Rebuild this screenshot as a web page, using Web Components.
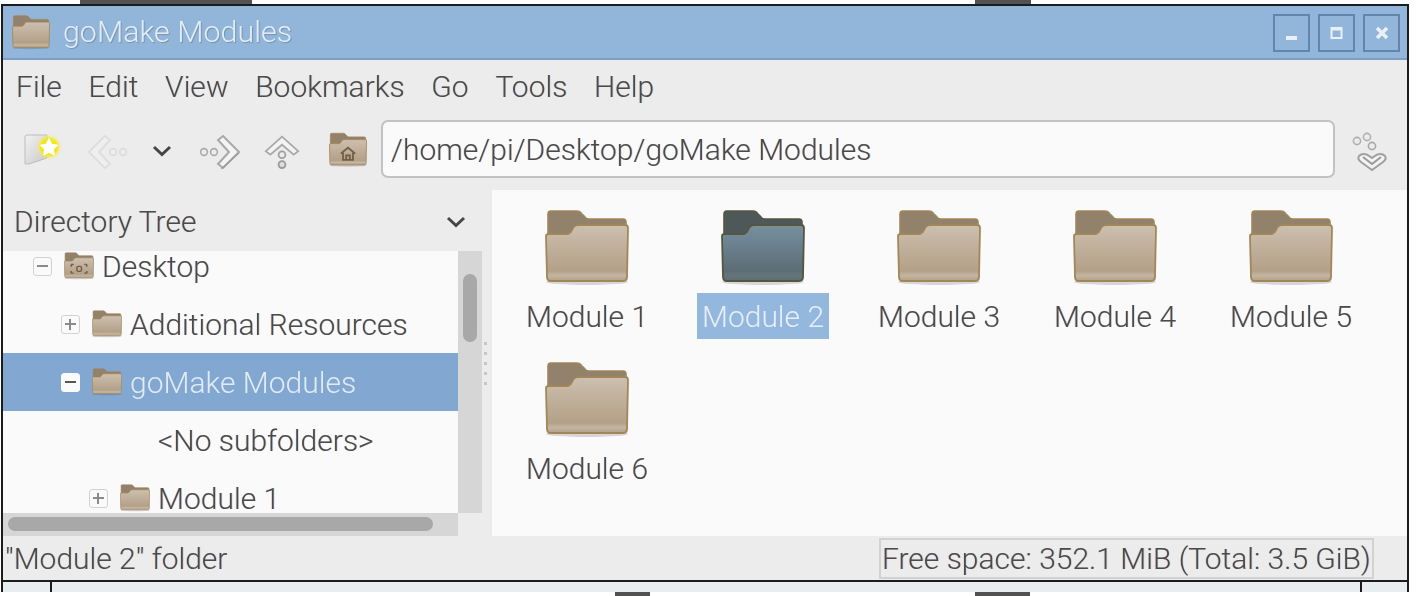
<!DOCTYPE html>
<html lang="en">
<head>
<meta charset="UTF-8">
<title>goMake Modules</title>
<style>
  html, body { margin: 0; padding: 0; background: #fff; }
  body { width: 1422px; height: 596px; overflow: hidden; font-family: Roboto, "Liberation Sans", sans-serif; font-weight: 300; color: #4a4a4a; }
</style>
</head>
<body>
  <desk-strip bars="80:172,723:56"></desk-strip>
  <fm-window>
    <fm-titlebar slot="title">goMake Modules</fm-titlebar>
    <fm-menubar slot="menu">
      <span>File</span><span>Edit</span><span>View</span><span>Bookmarks</span><span>Go</span><span>Tools</span><span>Help</span>
    </fm-menubar>
    <fm-toolbar slot="tools" path="/home/pi/Desktop/goMake Modules"></fm-toolbar>
    <fm-sidebar slot="side">
      <fm-tree-row depth="0" expander="minus" icon="desktop">Desktop</fm-tree-row>
      <fm-tree-row depth="1" expander="plus">Additional Resources</fm-tree-row>
      <fm-tree-row depth="1" expander="minus" selected>goMake Modules</fm-tree-row>
      <fm-tree-row depth="2" expander="none" icon="none">&lt;No subfolders&gt;</fm-tree-row>
      <fm-tree-row depth="2" expander="plus">Module 1</fm-tree-row>
    </fm-sidebar>
    <fm-grid slot="main">
      <fm-item>Module 1</fm-item>
      <fm-item selected>Module 2</fm-item>
      <fm-item>Module 3</fm-item>
      <fm-item>Module 4</fm-item>
      <fm-item>Module 5</fm-item>
      <fm-item>Module 6</fm-item>
    </fm-grid>
    <fm-status slot="status" free="Free space: 352.1 MiB (Total: 3.5 GiB)">"Module 2" folder</fm-status>
  </fm-window>
  <desk-strip bars="615:35,325:55"></desk-strip>

<script type="text/javascript">
  // folder artwork, shared by the tree, toolbar, title bar and grid
  let gradId = 0;
  function folderSvg(w, h, dark, emblem) {
    const id = 'g' + (++gradId);
    const top = dark ? '#77909e' : '#cdc0b0';
    const mid = dark ? '#667b88' : '#bdac96';
    const low = dark ? '#5c6d74' : '#b3a088';
    const foot = dark ? '#66757b' : '#c4b6a3';
    const line = dark ? '#55563f' : '#a3855a';
    const back = dark ? '#4f5859' : '#92816b';
    return `<svg width="${w}" height="${h}" viewBox="0 0 84 76" style="display:block">
      <defs>
        <linearGradient id="${id}" x1="0" y1="0" x2="0" y2="1">
          <stop offset="0" stop-color="${top}"/><stop offset=".5" stop-color="${mid}"/>
          <stop offset=".82" stop-color="${low}"/><stop offset=".9" stop-color="${foot}"/><stop offset="1" stop-color="${low}"/>
        </linearGradient>
      </defs>
      <ellipse cx="42" cy="72" rx="41" ry="3" fill="#000" opacity=".14"/>
      <path d="M3 4Q3 1 6 1H32Q35 1 37 4L40 7Q41 9 44 9H78Q81 9 81 12V30H3Z" fill="${back}" stroke="${line}" stroke-width="1.6"/>
      <path d="M1 26Q1 24 4 24H22Q25 24 27 20Q29 15 33 15H80Q83 15 83 18L82 67Q82 71 78 71H6Q2 71 2 67Z" fill="url(#${id})" stroke="${line}" stroke-width="1.8"/>
      ${emblem === 'home' ? '<path d="M26 46L42 33L58 46M31 44V60H53V44M38 60V50H46V60" fill="none" stroke="#6f5f47" stroke-width="4"/>' : ''}
      ${emblem === 'desktop' ? '<path d="M20 34H27M57 34H64M20 58H27M57 58H64M20 34V40M64 34V40M20 52V58M64 52V58" fill="none" stroke="#6f5f47" stroke-width="4"/><rect x="36" y="39" width="13" height="14" rx="4" fill="none" stroke="#6f5f47" stroke-width="4"/>' : ''}
    </svg>`;
  }

  function define(name, css, html) {
    customElements.define(name, class extends HTMLElement {
      constructor() {
        super();
        this.attachShadow({ mode: 'open' });
        this.shadowRoot.innerHTML = `<style>${css}</style>` + (typeof html === 'function' ? html(this) : html);
      }
    });
  }

  // the bits of other windows peeking out above and below
  define('desk-strip', `
    :host { display: flex; height: 4px; }
    i { display: block; height: 4px; background: #525252; }
  `, (el) => el.getAttribute('bars').split(',').map((b) => {
    const [gap, w] = b.split(':');
    return `<i style="margin-left:${gap}px;width:${w}px"></i>`;
  }).join(''));

  define('fm-window', `
    :host { display: flex; flex-direction: column; width: 1408px; height: 588px; margin-left: 1px; box-sizing: border-box;
      border: 2px solid #1c1c1c; background: #ececec; filter: blur(.5px); font-size: 30px;
      text-shadow: -.7px 0 0 rgba(225,140,70,.28), .7px 0 0 rgba(70,140,225,.28); }
    .body { display: flex; height: 346px; }
  `, `
    <slot name="title"></slot>
    <slot name="menu"></slot>
    <slot name="tools"></slot>
    <div class="body"><slot name="side"></slot><slot name="main"></slot></div>
    <slot name="status"></slot>
  `);

  define('fm-titlebar', `
    :host { display: flex; align-items: center; height: 54px; flex: none; box-sizing: border-box; background: #92b6d9;
      border-bottom: 2px solid #7d9fc4; padding: 0 7px 0 9px; }
    .name { margin-left: 13px; flex: 1; color: #e4edf5; font-size: 30.4px; line-height: 52px; text-shadow: 1px 1px 1px #7392b2; }
    .btns { display: flex; gap: 8px; margin-top: 1px; }
    .btn { width: 37px; height: 38px; box-sizing: border-box; border: 2px solid #6384ad; display: flex; align-items: center; justify-content: center; }
  `, () => `
    ${folderSvg(38, 35)}
    <span class="name"><slot></slot></span>
    <div class="btns">
      <div class="btn"><svg width="14" height="14" viewBox="0 0 14 14"><rect x="1" y="10" width="11" height="4" fill="#e9f0f7"/></svg></div>
      <div class="btn"><svg width="14" height="14" viewBox="0 0 14 14"><path d="M1.5 2H11.5V12H1.5Z" fill="none" stroke="#e9f0f7" stroke-width="2"/><rect x="1" y="1" width="11" height="3.5" fill="#e9f0f7"/></svg></div>
      <div class="btn"><svg width="14" height="14" viewBox="0 0 14 14"><path d="M2 2L12 12M12 2L2 12" stroke="#e9f0f7" stroke-width="3.6"/></svg></div>
    </div>
  `);

  define('fm-menubar', `
    :host { display: block; flex: none; height: 55px; box-sizing: border-box; padding: 0 0 0 13px; }
    .row { display: flex; gap: 26.7px; height: 53px; align-items: center; }
  `, `<div class="row"><slot></slot></div>`);

  define('fm-toolbar', `
    :host { display: flex; flex: none; height: 75px; align-items: flex-start; }
    .ic { flex: none; display: block; margin-top: 17px; }
    .addr { flex: none; width: 954px; height: 58px; margin: 5px 0 0 14px; box-sizing: border-box; border: 2px solid #c2c2c2; border-radius: 7px;
      background: #fafafa; padding: 0 8px; line-height: 55px; white-space: nowrap; overflow: hidden; }
  `, (el) => `
    <svg class="ic" style="margin-left:20px" width="42" height="40" viewBox="0 0 42 40">
      <defs><linearGradient id="sf" x1="0" y1="0" x2="1" y2="1"><stop offset="0" stop-color="#f2f2f2"/><stop offset="1" stop-color="#c8c8c8"/></linearGradient>
      <radialGradient id="gl"><stop offset=".62" stop-color="#f4e61a"/><stop offset="1" stop-color="#f8f08a" stop-opacity="0"/></radialGradient></defs>
      <path d="M2 32V5Q2 3 4 3H24V26L6 32Z" fill="url(#sf)" stroke="#bdbdbd"/>
      <circle cx="26" cy="15" r="13" fill="url(#gl)"/>
      <path d="M26 7L28.6 12.4L34 13.2L30 17.2L31 22.6L26 20L21 22.6L22 17.2L18 13.2L23.4 12.4Z" fill="#fff" stroke="#fff" stroke-linejoin="round" stroke-width="1.5"/>
    </svg>
    <svg class="ic" style="margin-left:21px" width="44" height="40" viewBox="0 0 44 40" fill="none" opacity=".45">
      <path d="M19 4L3 20L19 36L24 32L13 20L24 8Z" fill="#f4f4f4" stroke="#cfcfcf" stroke-width="2"/>
      <circle cx="27" cy="20" r="3.4" stroke="#c8c8c8" stroke-width="1.6"/><circle cx="37" cy="20" r="3.4" stroke="#c8c8c8" stroke-width="1.6"/>
    </svg>
    <svg class="ic" style="margin-left:22px;margin-top:30px" width="20" height="12" viewBox="0 0 20 12" fill="none"><path d="M2 2L10 9.5L18 2" stroke="#454545" stroke-width="3"/></svg>
    <svg class="ic" style="margin-left:26px" width="44" height="40" viewBox="0 0 44 40" fill="none">
      <circle cx="6" cy="20" r="3.4" stroke="#aaa" stroke-width="1.6"/><circle cx="16" cy="20" r="3.4" stroke="#aaa" stroke-width="1.6"/>
      <path d="M25 4L41 20L25 36L20 32L31 20L20 8Z" fill="#f3f3f3" stroke="#a8a8a8" stroke-width="2"/>
      <path d="M23 37L41 21" stroke="#8b8b8b" stroke-width="1.5" opacity=".5"/>
    </svg>
    <svg class="ic" style="margin-left:22px" width="36" height="40" viewBox="0 0 40 40" fill="none">
      <path d="M20 3L38 19L33 23L20 12L7 23L2 19Z" fill="#f3f3f3" stroke="#a8a8a8" stroke-width="2"/>
      <circle cx="20" cy="23" r="3.8" stroke="#a0a0a0" stroke-width="2"/><circle cx="20" cy="34" r="3.8" fill="#ddd" stroke="#9a9a9a" stroke-width="2"/>
    </svg>
    <span class="ic" style="margin-left:29px">${folderSvg(38, 36, false, 'home')}</span>
    <div class="addr">${el.getAttribute('path')}</div>
    <svg class="ic" style="margin-left:15px" width="40" height="40" viewBox="0 0 40 40" fill="none">
      <circle cx="7" cy="9" r="3.6" stroke="#b0b0b0" stroke-width="1.6"/><circle cx="17" cy="5" r="3.6" stroke="#b0b0b0" stroke-width="1.6"/><circle cx="22" cy="14" r="3.6" stroke="#a8a8a8" stroke-width="1.6"/>
      <path d="M9 24Q14 19 22 26Q30 19 35 24Q37 27 33 30L22 38L11 30Q7 27 9 24Z" fill="#f3f3f3" stroke="#a0a0a0" stroke-width="2"/>
      <path d="M13 25L22 32L31 25" stroke="#9a9a9a" stroke-width="2"/>
    </svg>
  `);

  define('fm-sidebar', `
    :host { display: grid; flex: none; width: 489px; height: 346px; grid-template-columns: 455px 24px 10px; grid-template-rows: 61px 262px 23px; }
    .head { grid-column: 1 / 4; display: flex; align-items: center; justify-content: space-between; padding: 2px 26px 0 11px; height: 61px; box-sizing: border-box; }
    .tree { background: #fafafa; overflow: hidden; height: 262px; }
    .tree .in { margin-top: -14px; }
    .vs { background: #d6d6d6; padding: 23px 5px 0; box-sizing: border-box; }
    .vs i { display: block; height: 68px; background: #a8a8a8; border-radius: 7px; }
    .handle { grid-row: 2 / 4; grid-column: 3; display: flex; flex-direction: column; gap: 7px; padding: 91px 0 0 2px; box-sizing: border-box; }
    .handle b { display: block; width: 3px; height: 3px; background: #c6c6c6; }
    .hs { background: #d6d6d6; padding: 4px 25px 0 5px; box-sizing: border-box; }
    .hs i { display: block; height: 14px; background: #a8a8a8; border-radius: 7px; }
    .hs-end { background: #ececec; }
  `, `
    <div class="head"><span>Directory Tree</span><svg width="20" height="12" viewBox="0 0 20 12" fill="none"><path d="M2 2L10 9.5L18 2" stroke="#454545" stroke-width="3"/></svg></div>
    <div class="tree"><div class="in"><slot></slot></div></div>
    <div class="vs"><i></i></div>
    <div class="handle"><b></b><b></b><b></b><b></b><b></b></div>
    <div class="hs"><i></i></div>
    <div class="hs-end"></div>
  `);

  define('fm-tree-row', `
    :host { display: flex; align-items: center; height: 58px; box-sizing: border-box; white-space: nowrap; }
    :host([selected]) { background: #82a8d2; color: #e2ebf4; text-shadow: none; }
    .exp { flex: none; width: 19px; height: 19px; box-sizing: border-box; border: 1.5px solid #d2d2d2; border-radius: 3px; background: #fafafa; margin-right: 12px; position: relative; }
    :host([selected]) .exp { border-color: #fafafa; }
    .exp::before { content: ""; position: absolute; left: 3px; right: 3px; top: 7px; height: 2px; background: #8a8a8a; }
    :host([selected]) .exp::before { background: #555; }
    .plus::after { content: ""; position: absolute; top: 3px; bottom: 3px; left: 7px; width: 2px; background: #8a8a8a; }
    .none { visibility: hidden; }
    .ic { flex: none; margin-right: 8px; }
  `, (el) => {
    const d = +el.getAttribute('depth');
    const exp = el.getAttribute('expander');
    const icon = el.getAttribute('icon');
    const pad = 30 + d * 28;
    return `<span class="exp ${exp}" style="margin-left:${pad}px"></span>
      ${icon === 'none' ? '<span style="width:38px"></span>' : `<span class="ic">${folderSvg(30, 28, false, icon === 'desktop' ? 'desktop' : '')}</span>`}
      <span><slot></slot></span>`;
  });

  define('fm-grid', `
    :host { display: grid; flex: 1; grid-template-columns: repeat(5, 176px); grid-auto-rows: 152px; align-content: start;
      background: #fafafa; padding: 20px 0 0 7px; box-sizing: border-box; height: 346px; }
  `, `<slot></slot>`);

  define('fm-item', `
    :host { display: flex; flex-direction: column; align-items: center; }
    .lab { margin-top: 7px; height: 46px; line-height: 48px; padding: 0 5px; white-space: nowrap; }
    :host([selected]) .lab { background: #94b7dd; color: #e6eff8; text-shadow: none; }
  `, (el) => `${folderSvg(84, 76, el.hasAttribute('selected'))}<span class="lab"><slot></slot></span>`);

  define('fm-status', `
    :host { display: flex; flex: none; flex-direction: column; height: 56px; }
    .row { display: flex; justify-content: space-between; height: 44px; padding: 0 33px 0 2px; align-items: center; box-sizing: border-box; }
    .msg { padding-top: 1px; }
    .free { border: 2px solid #d2d2d2; height: 41px; line-height: 37px; box-sizing: border-box; padding: 0 0 0 1px; width: 495px; white-space: nowrap; overflow: hidden; }
    .strip { display: flex; height: 12px; box-sizing: border-box; border-top: 2px solid #1c1c1c; background: #e8eef0; }
    .strip i { display: block; border-right: 2px solid #1c1c1c; }
  `, (el) => `
    <div class="row"><span class="msg"><slot></slot></span><span class="free">${el.getAttribute('free')}</span></div>
    <div class="strip"><i style="width:47px"></i><i style="width:1308px"></i></div>
  `);
</script>
</body>
</html>
